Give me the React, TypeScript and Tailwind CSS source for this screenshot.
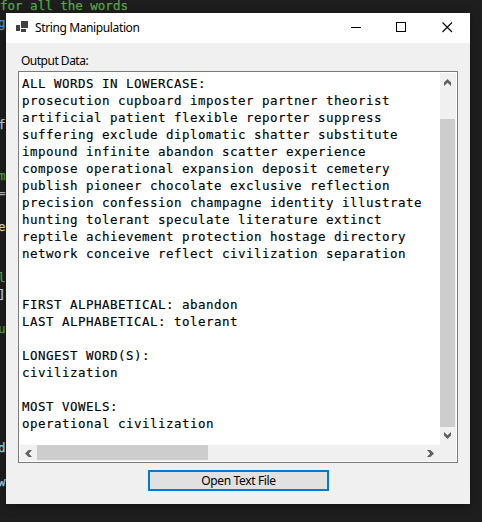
const output = [
  'ALL WORDS IN LOWERCASE:',
  'prosecution cupboard imposter partner theorist',
  'artificial patient flexible reporter suppress',
  'suffering exclude diplomatic shatter substitute',
  'impound infinite abandon scatter experience',
  'compose operational expansion deposit cemetery',
  'publish pioneer chocolate exclusive reflection',
  'precision confession champagne identity illustrate',
  'hunting tolerant speculate literature extinct',
  'reptile achievement protection hostage directory',
  'network conceive reflect civilization separation',
  '',
  '',
  'FIRST ALPHABETICAL: abandon',
  'LAST ALPHABETICAL: tolerant',
  '',
  'LONGEST WORD(S):',
  'civilization',
  '',
  'MOST VOWELS:',
  'operational civilization',
].join('\n');

// Editor lines behind the window, 17px apart; most show only their last character.
const code: Record<number, [string, string]> = {
  1: ['g', 'text-[#569cd6]'],
  7: ['f', 'text-[#c8c8c8]'],
  10: ['m', 'text-[#57a64a]'],
  11: ['=', 'text-[#b4b4b4]'],
  13: ['e', 'text-[#dcdcaa]'],
  16: ['l', 'text-[#57a64a]'],
  17: [']', 'text-[#c8dcec]'],
  19: ['u', 'text-[#57a64a]'],
  26: ['d', 'text-[#9cdcfe]'],
  28: ['w', 'text-[#9cdcfe]'],
};

function EditorBackdrop() {
  return (
    <div className="absolute inset-x-0 top-0 font-['DejaVu_Sans_Mono',monospace] text-[12.5px] leading-[17px] [-webkit-text-stroke:0.25px_currentColor]">
      <div className="h-[14px] whitespace-pre leading-[12px] text-[#57a64a]">for all the words</div>
      {Array.from({ length: 29 }, (_, i) => (
        <div key={i} className={`-ml-[2px] h-[17px] whitespace-pre ${code[i + 1]?.[1] ?? ''}`}>
          {code[i + 1]?.[0] ?? ''}
        </div>
      ))}
    </div>
  );
}

function Chevron({ turn }: { turn: string }) {
  return (
    <svg width="9" height="9" viewBox="0 0 9 9" className={turn} fill="#606060">
      <path d="M1 4.6 4.5 1 8 4.6V8L4.5 4.8 1 8z" />
    </svg>
  );
}

function TitleBar() {
  return (
    <header className="flex h-[30px] items-center bg-white">
      <svg width="12" height="12" viewBox="0 0 12 12" className="ml-[10px] -mt-[2px]" fill="#404040" shapeRendering="crispEdges">
        <path d="M5 0h7v7H5zM0 4h4v6H0zM5 8h5v3H5z" />
      </svg>
      <h1 className="ml-[7px] flex-1 whitespace-nowrap text-[12px] leading-[16px] tracking-[-0.38px]">String Manipulation</h1>
      <div className="-mt-[2px] mr-[17px] flex items-center gap-[35px]">
        <svg width="11" height="11" shapeRendering="crispEdges"><path d="M0 5.5h10" stroke="#000" /></svg>
        <svg width="10" height="11" className="-ml-px mr-px" fill="none" shapeRendering="crispEdges"><path d="M.5 .5h9v9h-9z" stroke="#000" /></svg>
        <svg width="11" height="11" fill="none"><path d="m.5 .5 9.5 9.5M10 .5 .5 10" stroke="#000" strokeWidth="1.1" /></svg>
      </div>
    </header>
  );
}

function OutputBox() {
  return (
    <div className="flex h-[392px] w-[440px] flex-col border border-[#7a7a7a] bg-white p-px">
      <div className="flex h-[372px]">
        <pre className="flex-1 pl-[2px] pt-[2px] font-['DejaVu_Sans_Mono',monospace] text-[12.5px] leading-[17px] tracking-[0.474px] [-webkit-text-stroke:0.15px_#000]">
          {output}
        </pre>
        <div className="flex w-4 flex-col bg-[#f0f0f0]">
          <div className="flex h-[46px] justify-center pr-px pt-[5px]"><Chevron turn="" /></div>
          <div className="h-[308px] w-[15px] bg-[#cdcdcd]" />
          <div className="flex flex-1 justify-center pr-px pt-[4px]"><Chevron turn="rotate-180" /></div>
        </div>
      </div>
      <div className="flex h-4 items-center bg-[#f0f0f0]">
        <div className="flex w-[17px] justify-center pr-px"><Chevron turn="-rotate-90" /></div>
        <div className="h-[15px] w-[171px] self-start bg-[#cdcdcd]" />
        <div className="ml-auto mr-[21px]"><Chevron turn="rotate-90" /></div>
      </div>
    </div>
  );
}

export default function App() {
  return (
    <main className="relative h-[522px] w-[482px] overflow-hidden bg-[#1e1e1e] pl-[6px] pt-[13px] font-['Noto_Sans',sans-serif] text-black">
      <EditorBackdrop />
      <section className="relative h-[491px] w-[464px] bg-[#f0f0f0] shadow-[0_2px_10px_rgba(0,0,0,0.35)]">
        <TitleBar />
        <div className="flex flex-col items-start pl-3">
          <label className="ml-[3px] h-[28px] pt-[10px] text-[12px] leading-[16px] tracking-[-0.5px]">Output Data:</label>
          <OutputBox />
          <button className="ml-[130px] mt-[7px] flex h-[21px] w-[181px] items-center justify-center border-2 border-[#0078d7] bg-[#e1e1e1] text-[12px] leading-none tracking-[-0.36px]">
            Open Text File
          </button>
        </div>
      </section>
    </main>
  );
}
